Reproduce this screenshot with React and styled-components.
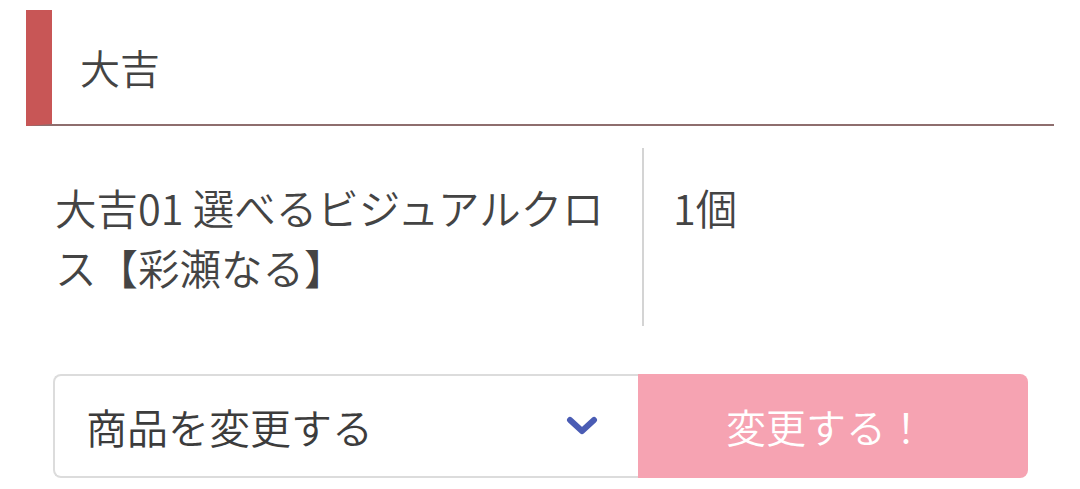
import React from "react";
import styled, { createGlobalStyle } from "styled-components";

const Global = createGlobalStyle`
  html, body { margin: 0; padding: 0; background: #fff; }
  body { font-family: "Noto Sans CJK JP", "Noto Sans", sans-serif; color: #444; }
`;

const Page = styled.div`
  padding: 10px 26px 0 26px;
`;

const Heading = styled.h2`
  margin: 0;
  height: 114px;
  display: flex;
  align-items: center;
  padding-left: 28px;
  border-left: 26px solid #c85656;
  border-bottom: 2px solid #8e6e6e;
  font-size: 40px;
  font-weight: 350;
  color: #444;
`;

const Row = styled.div`
  display: flex;
  margin-top: 22px;
`;

const Cell = styled.div`
  box-sizing: border-box;
  padding: 29px 30px 29px 29px;
  font-size: 41.5px;
  font-weight: 350;
  line-height: 60px;
  color: #444;
  width: ${(p) => p.$width};
  border-left: ${(p) => (p.$divider ? "2px solid #d4d4d4" : "none")};
`;

const Form = styled.div`
  display: flex;
  margin: 48px 26px 0 27px;
  height: 104px;
`;

const Select = styled.div`
  box-sizing: border-box;
  flex: 0 0 585px;
  display: flex;
  align-items: center;
  justify-content: space-between;
  padding: 0 40px 0 31px;
  border: 2px solid #dcdcdc;
  border-right: none;
  border-radius: 8px 0 0 8px;
  font-size: 41px;
  font-weight: 350;
  color: #3c3c3c;
`;

const Button = styled.button`
  flex: 1;
  border: none;
  border-radius: 0 8px 8px 0;
  background: #f6a3b2;
  color: #fff;
  font-family: "Noto Sans CJK JP", "Noto Sans", sans-serif;
  font-size: 40px;
  font-weight: 350;
  padding: 0 14px 0 0;
  text-align: center;
`;

const Chevron = () => (
  <svg width="32" height="22" viewBox="0 0 32 22">
    <path d="M4 5 L16 16 L28 5" fill="none" stroke="#4a5cb4" strokeWidth="6" strokeLinecap="round" strokeLinejoin="round" />
  </svg>
);

export default function App() {
  return (
    <>
      <Global />
      <Page>
        <Heading>大吉</Heading>
        <Row>
          <Cell $width="616px">大吉01 選べるビジュアルクロス【彩瀬なる】</Cell>
          <Cell $width="412px" $divider>1個</Cell>
        </Row>
        <Form>
          <Select>
            <span>商品を変更する</span>
            <Chevron />
          </Select>
          <Button>変更する！</Button>
        </Form>
      </Page>
    </>
  );
}
